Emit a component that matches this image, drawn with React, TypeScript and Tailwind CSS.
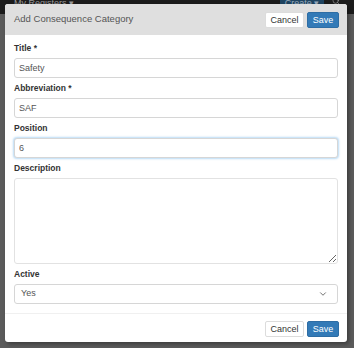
import React from 'react';
import { ChevronDown, Search } from 'lucide-react';

const Field = ({ label, children }: { label: string; children: React.ReactNode }) => (
  <div className="flex flex-col">
    <label className="mb-[4px] h-[12px] text-[8.5px] font-bold leading-[12px] text-[#333]">{label}</label>
    {children}
  </div>
);

const inputCls =
  'box-border h-[20px] w-full rounded-[3px] border border-[#d6d6d6] bg-white px-[4px] text-[9px] leading-[18px] text-[#555] outline-none';

const Buttons = () => (
  <div className="flex gap-[3px]">
    <button className="h-[16px] w-[39px] rounded-[2px] border border-[#dcdcdc] bg-white text-[9px] leading-[14px] text-[#333]">
      Cancel
    </button>
    <button className="h-[16px] w-[32px] rounded-[2px] border border-[#2e6da4] bg-[#337ab7] text-[9px] leading-[14px] text-white">
      Save
    </button>
  </div>
);

export default function App() {
  return (
    <div className="relative h-[348px] w-[354px] overflow-hidden bg-[#5b5b5b] font-['Liberation_Sans',Arial,sans-serif]">
      {/* dimmed page navbar behind the modal */}
      <div className="flex h-[14px] items-start bg-[#1c1c1c] px-[14px] text-[9px] leading-[6px] text-[#9a9a9a]">
        <span>My Registers ▾</span>
        <span className="ml-auto flex h-[6px] w-[44px] justify-center bg-[#1f4461] text-[#9ab]">Create ▾</span>
        <Search className="ml-[8px] -mt-[3px] h-[8px] w-[8px] text-[#999]" />
      </div>

      <div className="absolute left-[5px] top-[4px] flex h-[338px] w-[342px] flex-col rounded-[3px] bg-white shadow-[2px_2px_4px_rgba(0,0,0,0.35)]">
        <div className="flex h-[31px] items-center justify-between rounded-t-[3px] bg-[#dfdfdf] pl-[9px] pr-[8px]">
          <span className="text-[9.5px] text-[#555]">Add Consequence Category</span>
          <Buttons />
        </div>

        <div className="flex flex-col gap-[4px] px-[9px] pt-[7px] pb-[9px]">
          <Field label="Title *">
            <input className={inputCls} defaultValue="Safety" />
          </Field>
          <Field label="Abbreviation *">
            <input className={inputCls} defaultValue="SAF" />
          </Field>
          <Field label="Position">
            <input
              className={inputCls + ' border-[#80b3e6] shadow-[0_0_2px_1px_rgba(102,175,233,0.45)]'}
              defaultValue="6"
            />
          </Field>
          <Field label="Description">
            <textarea className="block h-[86px] w-full resize-y rounded-[3px] border border-[#e2e2e2] bg-white px-[4px] text-[9px] text-[#555] outline-none" />
          </Field>
          <Field label="Active">
            <div className="flex h-[20px] w-full items-center rounded-[3px] border border-[#d6d6d6] bg-white pl-[6px] pr-[9px] text-[9px] text-[#555]">
              <span>Yes</span>
              <ChevronDown className="ml-auto h-[10px] w-[10px] text-[#555]" strokeWidth={2} />
            </div>
          </Field>
        </div>

        <div className="flex flex-1 items-center justify-end border-t border-[#f0f0f0] pr-[8px] pt-[2px]">
          <Buttons />
        </div>
      </div>
    </div>
  );
}
